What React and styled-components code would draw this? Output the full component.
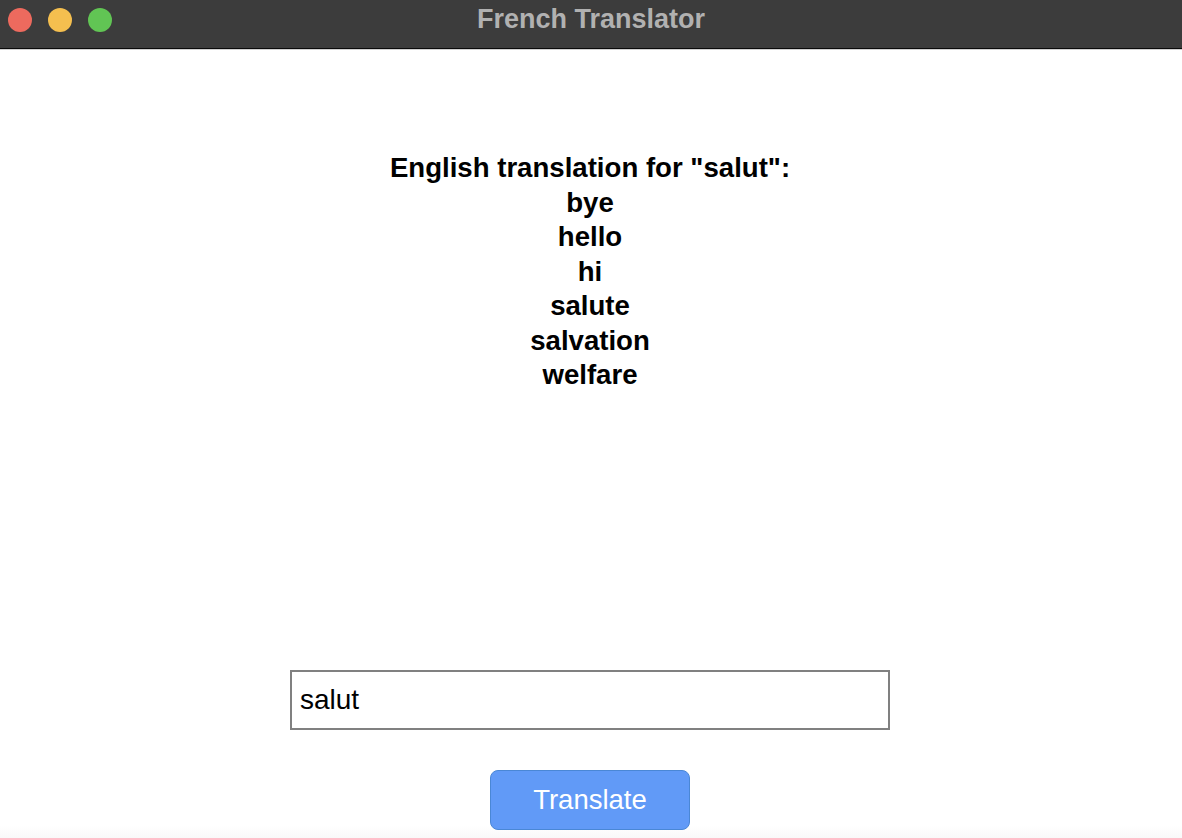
import React, { useState } from "react";
import styled, { createGlobalStyle } from "styled-components";

const Global = createGlobalStyle`
  html, body { margin: 0; padding: 0; background: #ffffff; }
  body { font-family: "Liberation Sans", Arial, sans-serif; }
  * { box-sizing: border-box; }
`;

const Window = styled.div`
  width: 1182px;
  height: 838px;
  display: flex;
  flex-direction: column;
  background: #ffffff;
  overflow: hidden;
`;

const TitleBar = styled.div`
  position: relative;
  height: 50px;
  flex: 0 0 50px;
  background: #3c3c3c;
  border-bottom: 1px solid #d0d0d0;
  box-shadow: inset 0 -1px 0 #0a0a0a;
  display: flex;
  align-items: center;
  justify-content: center;
`;

const Lights = styled.div`
  position: absolute;
  left: 8px;
  top: 8px;
  display: flex;
  gap: 16px;
`;

const Light = styled.span`
  width: 24px;
  height: 24px;
  border-radius: 50%;
  background: ${(p) => p.$color};
`;

const Title = styled.div`
  margin-top: -10px;
  color: #b1b1b1;
  font-weight: bold;
  font-size: 27px;
`;

const Content = styled.main`
  flex: 1;
  display: flex;
  flex-direction: column;
  align-items: center;
  padding: 101px 2px 8px 0;
  background: linear-gradient(to bottom, #ffffff 0, #ffffff 775px, #f9f9f9 100%);
`;

const Result = styled.div`
  text-align: center;
  font-weight: bold;
  font-size: 27.6px;
  line-height: 34.5px;
  color: #000;
`;

const Spacer = styled.div`
  flex: 1;
`;

const Input = styled.input`
  width: 600px;
  height: 60px;
  border: 2px solid #808080;
  padding: 0 8px;
  font-family: "Liberation Sans", Arial, sans-serif;
  font-size: 28px;
  color: #000;
  background: #fff;
  outline: none;
`;

const Button = styled.button`
  margin-top: 40px;
  width: 200px;
  height: 60px;
  border-radius: 8px;
  border: 1px solid #4a87d6;
  background: #619af7;
  color: #ffffff;
  font-family: "Liberation Sans", Arial, sans-serif;
  font-size: 27.5px;
  cursor: pointer;
`;

const words = ["bye", "hello", "hi", "salute", "salvation", "welfare"];

export default function App() {
  const [value, setValue] = useState("salut");
  return (
    <>
      <Global />
      <Window>
        <TitleBar>
          <Lights>
            <Light $color="#ed6a5e" />
            <Light $color="#f5bf4f" />
            <Light $color="#61c554" />
          </Lights>
          <Title>French Translator</Title>
        </TitleBar>
        <Content>
          <Result>
            <div>English translation for "salut":</div>
            {words.map((w) => (
              <div key={w}>{w}</div>
            ))}
          </Result>
          <Spacer />
          <Input value={value} onChange={(e) => setValue(e.target.value)} />
          <Button>Translate</Button>
        </Content>
      </Window>
    </>
  );
}
